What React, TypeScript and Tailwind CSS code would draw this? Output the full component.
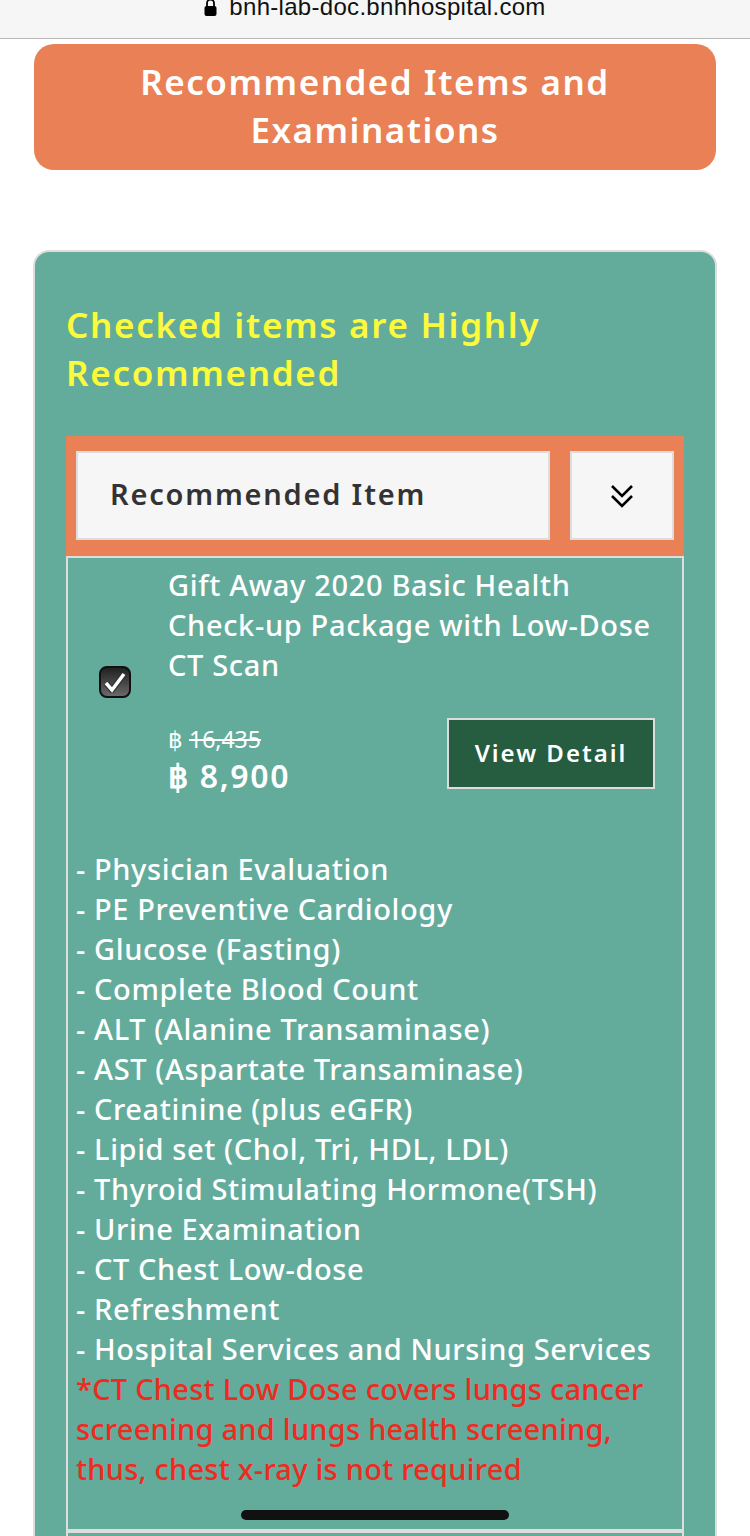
// App.tsx - Recommended items and examinations page
const items = [
  '- Physician Evaluation',
  '- PE Preventive Cardiology',
  '- Glucose (Fasting)',
  '- Complete Blood Count',
  '- ALT (Alanine Transaminase)',
  '- AST (Aspartate Transaminase)',
  '- Creatinine (plus eGFR)',
  '- Lipid set (Chol, Tri, HDL, LDL)',
  '- Thyroid Stimulating Hormone(TSH)',
  '- Urine Examination',
  '- CT Chest Low-dose',
  '- Refreshment',
  '- Hospital Services and Nursing Services',
];

export default function App() {
  return (
    <div className="relative h-[1536px] w-[750px] overflow-hidden bg-white font-['Noto_Sans',sans-serif]">
      {/* Browser address bar */}
      <div className="flex h-[39px] items-start justify-center gap-[12px] overflow-hidden border-b border-[#b8b8b8] bg-[#f6f6f6]">
        <svg width="13" height="20" viewBox="0 0 13 20" className="-mt-[2px]">
          <path d="M3 9V5a3.5 3.5 0 0 1 7 0v4" fill="none" stroke="#000" strokeWidth="1.8" />
          <rect x="0.5" y="8" width="12" height="10" rx="2" fill="#000" />
        </svg>
        <span className="-mt-[7px] font-['Liberation_Sans',sans-serif] text-[24px] leading-[28px] tracking-[0.3px] text-[#111]">
          bnh-lab-doc.bnhhospital.com
        </span>
      </div>

      <div className="flex flex-col px-[33px] pt-[5px]">
        {/* Page title */}
        <div className="mx-[1px] rounded-[20px] bg-[#ea8055] px-[32px] pt-[14px] pb-[16px] text-center text-[35px] leading-[48px] font-semibold tracking-[1.5px] text-white">
          Recommended Items and Examinations
        </div>

        {/* Green card */}
        <div className="mt-[80px] rounded-t-[16px] border-2 border-b-0 border-[#dddddd] bg-[#63ac9c] px-[31px] pt-[49px]">
          <h2 className="w-[540px] text-[35px] leading-[48px] font-semibold tracking-[1.7px] text-[#fbfb3c]">
            Checked items are Highly Recommended
          </h2>

          {/* Accordion header */}
          <div className="mt-[39px] flex h-[120px] items-start gap-[20px] bg-[#ea8055] px-[10px] pt-[15px]">
            <div className="flex h-[89px] w-[474px] items-center border-2 border-[#dddddd] bg-[#f6f6f6] pb-[3px] pl-[32px] text-[29px] font-semibold tracking-[1.8px] text-[#333333]">
              Recommended Item
            </div>
            <div className="flex h-[89px] w-[104px] items-center justify-center border-2 border-[#dddddd] bg-[#f6f6f6]">
              <svg width="24" height="24" viewBox="0 0 24 24" fill="none" stroke="#000" strokeWidth="2.6">
                <path d="M2 2l10 10L22 2" />
                <path d="M2 12l10 10 10-10" />
              </svg>
            </div>
          </div>

          {/* Accordion body */}
          <div className="border-2 border-[#dddddd] pb-[40px]">
            <div className="flex">
              <div className="flex w-[100px] items-center justify-center pt-[10px] pr-[7px]">
                <div className="flex h-[32px] w-[32px] items-center justify-center rounded-[8px] border-2 border-[#111111] bg-gradient-to-b from-[#222222] to-[#6a6a6a]">
                  <svg width="24" height="22" viewBox="0 0 24 22" fill="none">
                    <path d="M3 12l6 7L21 3" stroke="#333" strokeWidth="6" />
                    <path d="M3 12l6 7L21 3" stroke="#fff" strokeWidth="3.5" />
                  </svg>
                </div>
              </div>
              <div className="w-[490px] pt-[7px] text-white">
                <div className="text-[29px] leading-[40px] font-medium tracking-[0.65px]">
                  Gift Away 2020 Basic Health
                  <br />
                  Check-up Package with Low-Dose
                  <br />
                  CT Scan
                </div>
                <div className="mt-[36px] flex items-start justify-between pr-[3px]">
                  <div>
                    <div className="text-[23px] leading-[36px]">
                      ฿ <span className="line-through">16,435</span>
                    </div>
                    <div className="-mt-[1px] text-[32px] leading-[40px] font-semibold tracking-[1.7px]">฿ 8,900</div>
                  </div>
                  <div className="-mt-[3px] flex h-[71px] w-[208px] items-center justify-center border-2 border-[#dddddd] bg-[#265c40] pb-[1px] text-[24px] font-semibold tracking-[2px]">
                    View Detail
                  </div>
                </div>
              </div>
            </div>

            {/* Included examinations */}
            <div className="mt-[53px] pl-[8px] text-[29px] leading-[40px] font-medium tracking-[0.6px] text-white">
              {items.map((item) => (
                <div key={item}>{item}</div>
              ))}
              <div className="tracking-[0.25px] text-[#ed2b1f]">
                *CT Chest Low Dose covers lungs cancer
                <br />
                screening and lungs health screening,
                <br />
                thus, chest x-ray is not required
              </div>
            </div>
          </div>
          <div className="h-[20px] border-x-2 border-t-2 border-[#dddddd]" />
        </div>
      </div>

      {/* iOS home indicator */}
      <div className="absolute top-[1510px] left-[241px] h-[10px] w-[268px] rounded-full bg-[#111111]" />
    </div>
  );
}
